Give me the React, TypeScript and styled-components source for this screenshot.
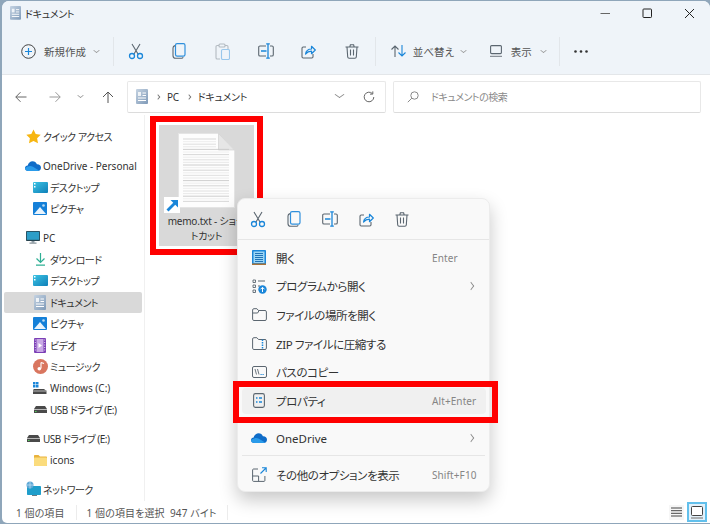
import React from 'react'
import styled, { createGlobalStyle } from 'styled-components'

const GlobalStyle = createGlobalStyle`
  html, body {
    margin: 0;
    padding: 0;
    width: 710px;
    height: 524px;
    overflow: hidden;
    background: #8fa6ba;
    font-family: "Noto Sans", "Noto Sans CJK JP", sans-serif;
    font-feature-settings: "palt";
    color: #2b2b2b;
  }
  * { box-sizing: border-box; }
  svg { display: block; flex: none; }
`

const Window = styled.div`
  position: relative;
  width: 708px;
  height: 522px;
  margin: 1px 0 0 2px;
  background: #fff;
  border-radius: 7px 7px 0 5px;
  overflow: hidden;
  display: flex;
  flex-direction: column;
`

const TitleBar = styled.div`
  height: 24px;
  background: #eff4f9;
  display: flex;
  align-items: center;
  padding-left: 8px;
  font-size: 10px;
  letter-spacing: -0.3px;
`

const TitleText = styled.span`
  flex: 1;
  color: #333;
  margin-left: 4px;
`

const WindowButton = styled.div`
  width: 42px;
  display: flex;
  justify-content: center;
`

const Toolbar = styled.div`
  height: 50px;
  background: #eff4f9;
  border-bottom: 1px solid #e3e6e9;
  display: flex;
  align-items: center;
  padding: 3px 0 0 19px;
  font-size: 10.5px;
  color: #555;
`

const LabelButton = styled.div<{ $width: number; $gap: number }>`
  width: ${p => p.$width}px;
  display: flex;
  align-items: center;
  gap: ${p => p.$gap}px;
`

const IconButton = styled.div<{ $disabled?: boolean }>`
  width: 43.3px;
  display: flex;
  justify-content: center;
  opacity: ${p => (p.$disabled ? 0.4 : 1)};
`

const ToolbarSep = styled.div<{ $left: number; $right: number }>`
  width: 1px;
  height: 29px;
  background: #e2e6ea;
  margin: 0 ${p => p.$right}px 0 ${p => p.$left}px;
`

const Chevron = styled.span`
  width: 5px;
  height: 5px;
  border-right: 1px solid #9a9a9a;
  border-bottom: 1px solid #9a9a9a;
  transform: scale(0.9, 0.7) rotate(45deg);
  margin-top: -2px;
`

const AddressRow = styled.div`
  height: 40px;
  display: flex;
  align-items: center;
  padding: 3px 7px 0 0;
  font-size: 10px;
  letter-spacing: -0.3px;
`

const NavGroup = styled.div`
  width: 125px;
  display: flex;
  align-items: center;
  padding-left: 12px;
`

const NavButton = styled.div<{ $left: number }>`
  width: 14px;
  margin-left: ${p => p.$left}px;
  display: flex;
  justify-content: center;
`

const Field = styled.div`
  height: 32px;
  border: 1px solid #e8e8e8;
  border-bottom-color: #dcdcdc;
  border-radius: 2px;
  display: flex;
  align-items: center;
  background: #fff;
`

const AddressBox = styled(Field)`
  width: 259px;
  padding-left: 8px;
  color: #333;
`

const Crumb = styled.span`
  margin-left: 7px;
  white-space: nowrap;
`

const CrumbSep = styled.span`
  margin-left: 8px;
  width: 4px;
  height: 4px;
  border-top: 1px solid #777;
  border-right: 1px solid #777;
  transform: scaleX(0.8) rotate(45deg);
`

const AddressTail = styled.div`
  margin-left: auto;
  display: flex;
  align-items: center;
  padding-right: 10px;
  gap: 20px;
`

const DropChevron = styled.span`
  width: 7px;
  height: 7px;
  border-right: 1px solid #888;
  border-bottom: 1px solid #888;
  transform: scaleY(0.7) rotate(45deg);
  margin-top: -4px;
`

const SearchBox = styled(Field)`
  width: 308px;
  margin-left: 7px;
  padding-left: 13px;
  gap: 12px;
  color: #8a8a8a;
  font-size: 10px;
  letter-spacing: -0.5px;
`

const Body = styled.div`
  flex: 1;
  display: flex;
  min-height: 0;
`

const Sidebar = styled.div`
  width: 143px;
  border-right: 1px solid #f0f0f0;
  padding: 11px 2px 0 2px;
  font-size: 10px;
`

const NavSection = styled.div`
  margin-bottom: 7.5px;
`

const NavRow = styled.div<{ $level?: number; $active?: boolean }>`
  height: 21.5px;
  display: flex;
  align-items: center;
  gap: 2px;
  padding-left: ${p => (p.$level ? 28 : 21)}px;
  white-space: nowrap;
  border-radius: 2px;
  color: #333;
  background: ${p => (p.$active ? '#d9d9d9' : 'transparent')};
`

const NavLabel = styled.span<{ $latin?: boolean }>`
  letter-spacing: ${p => (p.$latin ? 0 : -0.5)}px;
`

const NavIcon = styled.span`
  width: 16px;
  height: 16px;
  display: flex;
  align-items: center;
  justify-content: center;
`

const Content = styled.div`
  flex: 1;
  padding: 1px 0 0 5px;
`

const FileFrame = styled.div`
  width: 113px;
  height: 139px;
  border: 6px solid #ff0000;
  padding: 3px;
  background: #fff;
`

const FileTile = styled.div`
  position: relative;
  width: 95px;
  height: 121px;
  background: #d9d9d9;
  display: flex;
  flex-direction: column;
  align-items: center;
  padding-top: 8px;
`

const ShortcutBadge = styled.span`
  position: absolute;
  left: 5px;
  top: 72px;
  width: 16px;
  height: 16px;
  background: #fff;
  display: flex;
  align-items: center;
  justify-content: center;
`

const FileName = styled.div`
  margin-top: 6px;
  width: 95px;
  text-align: center;
  font-size: 10px;
  line-height: 15px;
  letter-spacing: -0.2px;
  color: #333;
  white-space: nowrap;
`

const StatusBar = styled.div`
  height: 22px;
  display: flex;
  align-items: center;
  padding-left: 14px;
  font-size: 10px;
  color: #555;
  letter-spacing: 0.1px;
`

const StatusSep = styled.span`
  width: 1px;
  height: 15px;
  background: #ececec;
  margin: 0 10px 0 11px;
`

const ViewToggles = styled.div`
  margin-left: auto;
  display: flex;
  align-items: center;
  gap: 3px;
  padding-right: 3px;
`

const ViewToggle = styled.span<{ $active?: boolean }>`
  width: ${p => (p.$active ? 20 : 15)}px;
  height: ${p => (p.$active ? 20 : 15)}px;
  display: flex;
  align-items: center;
  justify-content: center;
  background: ${p => (p.$active ? '#e2f1fb' : '#f6f6f6')};
  border: ${p => (p.$active ? '2px solid #62c0ec' : 'none')};
`

const Menu = styled.div`
  position: absolute;
  left: 235px;
  top: 197px;
  width: 253px;
  height: 294px;
  background: #f9f9f9;
  border-radius: 8px;
  border: 1px solid #ececec;
  box-shadow: 0 8px 18px rgba(0, 0, 0, 0.22);
  display: flex;
  flex-direction: column;
  font-size: 11.5px;
  color: #333;
`

const MenuIconBar = styled.div`
  height: 41px;
  flex: none;
  border-bottom: 1px solid #e6e6e6;
  display: flex;
  align-items: center;
  padding: 0 0 0 2px;
  margin-bottom: 3.5px;
`

const MenuIconButton = styled.div`
  width: 36px;
  display: flex;
  justify-content: center;
`

const MenuItem = styled.div<{ $hover?: boolean }>`
  height: ${p => (p.$hover ? 26 : 28.6)}px;
  margin: ${p => (p.$hover ? '1.3px 3px 10px 4px' : '0 3px 0 4px')};
  display: flex;
  align-items: center;
  padding: 0 10px 0 9px;
  border-radius: 4px;
  background: ${p => (p.$hover ? '#f0f0f0' : 'transparent')};
`

const MenuIcon = styled.span`
  width: 16px;
  height: 16px;
  margin-right: 9px;
  display: flex;
  align-items: center;
  justify-content: center;
`

const MenuLabel = styled.span<{ $latin?: boolean }>`
  flex: 1;
  white-space: nowrap;
  letter-spacing: ${p => (p.$latin ? 0 : -0.4)}px;
`

const Shortcut = styled.span`
  width: 44px;
  color: #858585;
  font-size: 10px;
  letter-spacing: 0.1px;
  white-space: nowrap;
`

const MenuArrow = styled.span`
  width: 6px;
  height: 6px;
  border-top: 1px solid #8a8a8a;
  border-right: 1px solid #8a8a8a;
  transform: scaleX(0.75) rotate(45deg);
  margin-right: 2px;
`

const MenuDivider = styled.div`
  height: 1px;
  background: #e6e6e6;
  margin: 3px 4px 4px;
`

const RedBox = styled.div`
  position: absolute;
  left: 231px;
  top: 380px;
  width: 265px;
  height: 42px;
  border: 6px solid #ff0000;
  pointer-events: none;
`

const B = '#1a86d9'
const G = '#5b6670'

const CutIcon = () => (
  <svg width="16" height="17" viewBox="0 0 16 17" fill="none">
    <path d="M4 1l6 10M12 1L6 11" stroke={G} strokeWidth="1.1" />
    <circle cx="4" cy="13" r="2.5" stroke={B} strokeWidth="1.3" />
    <circle cx="12" cy="13" r="2.5" stroke={B} strokeWidth="1.3" />
  </svg>
)

const CopyIcon = () => (
  <svg width="14" height="16" viewBox="0 0 14 16" fill="none">
    <rect x="3.5" y="0.7" width="9.5" height="12.5" rx="1.6" stroke="#2f8fdc" strokeWidth="1.2" />
    <path d="M3 2.6C1.6 3 1 3.6 1 5v7.5C1 14.2 2 15.3 3.6 15.3h6c.8 0 1.3-.4 1.6-1" stroke={G} strokeWidth="1.1" />
  </svg>
)

const PasteIcon = () => (
  <svg width="15" height="17" viewBox="0 0 15 17" fill="none">
    <path d="M4 2.5H2.2C1.5 2.5 1 3 1 3.7v11C1 15.5 1.5 16 2.2 16H5M10 2.5h1.8c.7 0 1.2.5 1.2 1.2V6" stroke={G} strokeWidth="1.1" />
    <rect x="4" y="1" width="6" height="3" rx="1" stroke={G} strokeWidth="1.1" />
    <rect x="6.5" y="6.5" width="8" height="10" rx="1.3" stroke={B} strokeWidth="1.1" />
  </svg>
)

const RenameIcon = () => (
  <svg width="16" height="16" viewBox="0 0 16 16" fill="none">
    <path d="M8 3H2C1.2 3 .7 3.5 .7 4.3v7.4c0 .8.5 1.3 1.3 1.3h6M12 3h2c.8 0 1.3.5 1.3 1.3v7.4c0 .8-.5 1.3-1.3 1.3h-2" stroke={G} strokeWidth="1.1" />
    <path d="M3 8h5.5M10 .8v14.4M8.2.8h3.6M8.2 15.2h3.6" stroke={B} strokeWidth="1.3" />
  </svg>
)

const ShareIcon = () => (
  <svg width="15" height="15" viewBox="0 0 15 15" fill="none">
    <path d="M5 3H2.2C1.4 3 1 3.5 1 4.2v8.6c0 .8.5 1.2 1.2 1.2h8.6c.7 0 1.2-.4 1.2-1.2V10" stroke={G} strokeWidth="1.1" />
    <path d="M4.5 10c.5-3 2.5-5 6-5V2.3L14.3 6l-3.8 3.7V7.2c-2.5 0-4.5 1-6 2.8z" stroke={B} strokeWidth="1.2" strokeLinejoin="round" />
  </svg>
)

const TrashIcon = () => (
  <svg width="14" height="15" viewBox="0 0 14 15" fill="none" stroke={G} strokeWidth="1.1">
    <path d="M.5 3h13M4.8 3l.6-2.2h3.2L9.2 3M2 3l.7 10c.1.8.6 1.3 1.4 1.3h5.8c.8 0 1.3-.5 1.4-1.3L12 3M5.5 5.500v6M8.500 5.500v6" />
  </svg>
)

const DocIcon = ({ size = 12 }: { size?: number }) => (
  <svg width={size} height={size * 1.25} viewBox="0 0 12 15">
    <defs>
      <linearGradient id="docfill" x1="0" y1="0" x2="1" y2="1">
        <stop offset="0" stopColor="#c5d3e2" />
        <stop offset="1" stopColor="#7f9ab8" />
      </linearGradient>
    </defs>
    <rect width="12" height="15" rx="1" fill="url(#docfill)" />
    <path d="M6.500 4h3.500M6.500 6.500h3.500M2 9h8M2 11.500h8" stroke="#fff" strokeWidth="1" />
    <rect x="2" y="3" width="3" height="4" fill="#fff" opacity="0.8" />
  </svg>
)

const StarIcon = () => (
  <svg width="15" height="15" viewBox="0 0 15 15">
    <path d="M7.500.5l2.200 4.600 5 .7-3.600 3.500.9 5-4.500-2.400L3 14.300l.9-5L.3 5.800l5-.7z" fill="#f7b611" />
  </svg>
)

const CloudIcon = ({ width = 16 }: { width?: number }) => (
  <svg width={width} height={width * 0.625} viewBox="0 0 16 10">
    <path d="M3.400 10C1.400 10 0 8.800 0 7.200 0 5.600 1.200 4.600 2.700 4.500 3.300 2 5.200.3 7.600.3c2 0 3.600 1.200 4.300 3 2.300-.2 4.100 1.400 4.100 3.400S14.500 10 12.700 10z" fill="#0f6cc8" />
    <path d="M3.400 10C1.400 10 0 8.800 0 7.200c2.500-2 5-3 8-1.500l6 3.800c-.4.300-.8.500-1.300.5z" fill="#2a9bea" />
  </svg>
)

const DesktopIcon = () => (
  <svg width="15" height="11" viewBox="0 0 15 11">
    <defs>
      <linearGradient id="deskfill" x1="0" y1="0" x2="1" y2="1">
        <stop offset="0" stopColor="#3cc4e4" />
        <stop offset="1" stopColor="#0f7fb8" />
      </linearGradient>
    </defs>
    <rect width="15" height="11" rx="1" fill="url(#deskfill)" />
    <rect x="1" y="1" width="1.500" height="1.500" fill="#fff" />
    <rect x="1" y="4" width="1.500" height="1.500" fill="#fff" />
  </svg>
)

const PictureIcon = () => (
  <svg width="14" height="13" viewBox="0 0 14 13">
    <rect width="14" height="13" rx="1" fill="#1580d8" />
    <path d="M1 12l6-7 6 7z" fill="#eaf4fc" />
    <circle cx="10.500" cy="3.500" r="1.300" fill="#bcdcf4" />
  </svg>
)

const MonitorIcon = () => (
  <svg width="14" height="13" viewBox="0 0 14 13">
    <rect width="14" height="10" rx="0.800" fill="#27434f" />
    <rect x="0.800" y="0.800" width="12.400" height="8" fill="#2d9ec8" />
    <rect x="5.500" y="10" width="3" height="1.600" fill="#8b9aa3" />
    <rect x="3.500" y="11.600" width="7" height="1" fill="#6c7b84" />
  </svg>
)

const DownloadIcon = () => (
  <svg width="11" height="13" viewBox="0 0 11 13" fill="none" stroke="#2eaf94" strokeWidth="1.200">
    <path d="M5.500 0v9M1.500 5.500l4 4 4-4M1 12.200h9" />
  </svg>
)

const VideoIcon = () => (
  <svg width="12" height="15" viewBox="0 0 12 15">
    <rect width="12" height="15" rx="1" fill="#7b3fb6" />
    <rect x="2.500" y="1" width="7" height="13" fill="#c9a9e6" />
    <path d="M4.500 5l3.500 2.500L4.500 10z" fill="#fff" />
    <path d="M.8 2h1M.8 4.500h1M.8 7h1M.8 9.500h1M.8 12h1M10.200 2h1M10.200 4.500h1M10.200 7h1M10.200 9.500h1M10.200 12h1" stroke="#fff" strokeWidth="0.800" />
  </svg>
)

const MusicIcon = () => (
  <svg width="15" height="15" viewBox="0 0 15 15">
    <circle cx="7.500" cy="7.500" r="7.500" fill="#d9765f" />
    <path d="M8 3.500v6M8 3.500l3 1" stroke="#fff" strokeWidth="1.100" fill="none" />
    <circle cx="6.300" cy="9.800" r="1.800" fill="#fff" />
  </svg>
)

const DriveIcon = () => (
  <svg width="13" height="7" viewBox="0 0 13 7">
    <path d="M2 0h9l2 3v4H0V3z" fill="#4a4a4a" />
    <rect y="3" width="13" height="1" fill="#b8b8b8" />
    <rect x="1" y="5" width="1.500" height="1" fill="#52d45a" />
  </svg>
)

const WindowsDriveIcon = () => (
  <svg width="14" height="12" viewBox="0 0 14 12">
    <path d="M0 0h2.500v2.500H0zM3 0h2.500v2.500H3zM0 3h2.500v2.500H0zM3 3h2.500v2.500H3z" fill="#1a86d9" />
    <path d="M1 7h10l2.500 2v3H0V8z" fill="#4a4a4a" />
    <rect y="8.500" width="14" height="1" fill="#b8b8b8" />
  </svg>
)

const FolderIcon = () => (
  <svg width="13" height="11" viewBox="0 0 13 11">
    <path d="M0 1c0-.6.4-1 1-1h3.500l1.500 1.500h6c.6 0 1 .4 1 1V10c0 .6-.4 1-1 1H1c-.6 0-1-.4-1-1z" fill="#e9b23c" />
    <rect y="2.500" width="13" height="8.500" rx="0.800" fill="#fbdc7d" />
  </svg>
)

const NetworkIcon = () => (
  <svg width="15" height="16" viewBox="0 0 15 16">
    <rect x="1" y="5" width="14" height="9" rx="0.800" fill="#1f9ecb" />
    <rect x="6" y="14" width="5" height="1" fill="#6c7b84" />
    <circle cx="4" cy="4" r="3.500" fill="#5fa8d6" />
    <path d="M1 4h6M4 .6v7" stroke="#d8ecf8" strokeWidth="0.600" />
  </svg>
)

const NotepadIcon = () => (
  <svg width="14" height="15" viewBox="0 0 14 15">
    <rect width="14" height="15" rx="0.800" fill="#1a86d9" />
    <rect x="1.500" y="1.500" width="11" height="11.500" fill="#9dd6f5" />
    <path d="M3 3.500h8M3 5.500h8M3 7.500h8M3 9.500h8M3 11.500h8" stroke="#1268b0" strokeWidth="0.900" />
    <rect y="13.500" width="14" height="1.500" fill="#a9743a" />
  </svg>
)

const OpenWithIcon = () => (
  <svg width="15" height="15" viewBox="0 0 15 15" fill="none">
    <path d="M1 1h2.500v2.500H1zM1 6h2.500v2.500H1zM1 11h2.500v2.500H1z" stroke={G} strokeWidth="0.900" />
    <path d="M6 2h7M6 7h2" stroke={G} strokeWidth="1" />
    <circle cx="10.500" cy="10.500" r="4.200" fill={B} />
    <path d="M10.500 13v-4.500M8.500 10.300l2-2 2 2" stroke="#fff" strokeWidth="1" />
  </svg>
)

const MenuFolderIcon = ({ zip }: { zip?: boolean }) => (
  <svg width="15" height="13" viewBox="0 0 15 13" fill="none">
    <path d="M.6 2C.6 1.200 1.100.700 1.900.700h3l1.600 1.800h6.500c.9 0 1.400.5 1.400 1.300v7.400c0 .8-.5 1.300-1.400 1.300H1.900c-.8 0-1.300-.5-1.300-1.300z" stroke={G} strokeWidth="1" />
    {zip ? <path d="M10.500 2.500v9.500" stroke={B} strokeWidth="1.500" strokeDasharray="1.500 1" /> : <path d="M.6 5h5l1.500-2.500" stroke={G} strokeWidth="1" />}
  </svg>
)

const PathIcon = () => (
  <svg width="15" height="12" viewBox="0 0 15 12" fill="none">
    <rect x="0.500" y="0.500" width="14" height="11" rx="1.500" stroke={G} strokeWidth="1" />
    <path d="M3 3l1.500 5.500M5.500 3L7 8.500" stroke={G} strokeWidth="0.900" />
    <path d="M8.500 8.500h1.200M10.500 8.500h1.200" stroke={B} strokeWidth="1.100" />
  </svg>
)

const PropertiesIcon = () => (
  <svg width="12" height="15" viewBox="0 0 12 15" fill="none">
    <rect x="0.600" y="0.600" width="10.800" height="13.800" rx="1.800" stroke={G} strokeWidth="1.100" />
    <path d="M3 5h1.500M6 5h3M3 9h1.500M6 9h3" stroke={B} strokeWidth="1.400" />
  </svg>
)

const MoreOptionsIcon = () => (
  <svg width="15" height="15" viewBox="0 0 15 15" fill="none">
    <path d="M6 2H1.500C1 2 .6 2.400.6 3v10.500c0 .5.400.9.900.9H12c.5 0 .9-.4.900-.9V9M.6 9h6v5.400" stroke={G} strokeWidth="1" />
    <path d="M8.500 6.500L14 1M10 .8h4.200V5" stroke={B} strokeWidth="1.100" />
  </svg>
)

const PlusIcon = () => (
  <svg width="15" height="15" viewBox="0 0 15 15" fill="none">
    <circle cx="7.500" cy="7.500" r="6.800" stroke="#444" strokeWidth="1" />
    <path d="M7.500 4v7M4 7.500h7" stroke={B} strokeWidth="1.200" />
  </svg>
)

const SortIcon = () => (
  <svg width="15" height="12" viewBox="0 0 15 12" fill="none" strokeWidth="1.100">
    <path d="M4 12V1M.5 4.500L4 1l3.500 3.500" stroke={G} />
    <path d="M11 0v11M7.500 7.500L11 11l3.500-3.500" stroke={B} />
  </svg>
)

const ViewIcon = () => (
  <svg width="12" height="12" viewBox="0 0 12 12" fill="none">
    <rect x="0.600" y="0.600" width="10.800" height="8" rx="1" stroke={G} strokeWidth="1.100" />
    <path d="M0 11.300h12" stroke="#8a9199" strokeWidth="1.300" />
  </svg>
)

const DotsIcon = () => (
  <svg width="14" height="3" viewBox="0 0 14 3" fill="#333">
    <circle cx="1.500" cy="1.500" r="1.300" />
    <circle cx="7" cy="1.500" r="1.300" />
    <circle cx="12.500" cy="1.500" r="1.300" />
  </svg>
)

const ArrowIcon = ({ dir, color }: { dir: 'left' | 'right' | 'up'; color: string }) => {
  const d = {
    left: 'M11.500 6H.8M5.500 1.200L.8 6l4.700 4.800',
    right: 'M.5 6h10.700M6.500 1.200L11.200 6l-4.700 4.800',
    up: 'M6 12V1M1 6l5-5 5 5',
  }[dir]
  return (
    <svg width="12" height="12" viewBox="0 0 12 12" fill="none" stroke={color} strokeWidth="1">
      <path d={d} />
    </svg>
  )
}

const ReloadIcon = () => (
  <svg width="12" height="12" viewBox="0 0 12 12" fill="none" stroke="#666" strokeWidth="1">
    <path d="M10.800 6A4.800 4.800 0 1 1 9.300 2.500M9.800.4v2.700H7" />
  </svg>
)

const SearchIcon = () => (
  <svg width="12" height="12" viewBox="0 0 12 12" fill="none" stroke="#8a8a8a" strokeWidth="1">
    <circle cx="7.500" cy="4.500" r="3.700" />
    <path d="M4.800 7.200L.8 11.200" />
  </svg>
)

const WindowGlyph = ({ kind }: { kind: 'min' | 'max' | 'close' }) => (
  <svg width="11" height="11" viewBox="0 0 11 11" fill="none" stroke="#222" strokeWidth="1">
    {kind === 'min' && <path d="M.500 5.500h9.500" stroke="#666" />}
    {kind === 'max' && <rect x="1" y="1" width="8.500" height="8.500" rx="0.800" />}
    {kind === 'close' && <path d="M1 1l9 9M10 1l-9 9" />}
  </svg>
)

const ListViewIcon = () => (
  <svg width="11" height="10" viewBox="0 0 11 10" stroke="#444" strokeWidth="1">
    <path d="M0 1h11M0 3.700h11M0 6.300h11M0 9h11" />
  </svg>
)

const TileViewIcon = () => (
  <svg width="12" height="13" viewBox="0 0 12 13" fill="none">
    <rect x="0.500" y="0.500" width="11" height="9" rx="1" stroke="#444" fill="#fff" />
    <path d="M0 12h12" stroke="#999" strokeWidth="1.500" />
  </svg>
)

const LINE_SHADES = ['#d2d2d2', '#ececec', '#dcdcdc', '#e6e6e6', '#c8c8c8', '#eeeeee']

const TextFileIcon = () => (
  <svg width="57" height="75" viewBox="0 0 57 75">
    <path d="M.5.5h40L56.500 17v57.500H.5z" fill="#fdfdfd" stroke="#e4e4e4" />
    <path d="M40.500.5V17h16z" fill="#e6e6e6" stroke="#d0d0d0" strokeWidth="0.700" />
    {Array.from({ length: 25 }, (_, i) => (
      <line
        key={i}
        x1="5"
        x2={i < 4 ? 38 : 51}
        y1={6 + i * 2.600}
        y2={6 + i * 2.600}
        stroke={LINE_SHADES[i % 6]}
        strokeWidth="0.900"
      />
    ))}
  </svg>
)

const ShortcutArrow = () => (
  <svg width="13" height="13" viewBox="0 0 13 13" fill="none">
    <path d="M1.500 11.500L9 4" stroke="#1a86d9" strokeWidth="2.800" />
    <path d="M4.500 1h7.500v7.500z" fill="#1a86d9" />
  </svg>
)

const navSections: { label: string; icon: React.ReactNode; level?: number; active?: boolean; latin?: boolean }[][] = [
  [{ label: 'クイック アクセス', icon: <StarIcon /> }],
  [
    { label: 'OneDrive - Personal', icon: <CloudIcon />, latin: true },
    { label: 'デスクトップ', icon: <DesktopIcon />, level: 1 },
    { label: 'ピクチャ', icon: <PictureIcon />, level: 1 },
  ],
  [
    { label: 'PC', icon: <MonitorIcon />, latin: true },
    { label: 'ダウンロード', icon: <DownloadIcon />, level: 1 },
    { label: 'デスクトップ', icon: <DesktopIcon />, level: 1 },
    { label: 'ドキュメント', icon: <DocIcon />, level: 1, active: true },
    { label: 'ピクチャ', icon: <PictureIcon />, level: 1 },
    { label: 'ビデオ', icon: <VideoIcon />, level: 1 },
    { label: 'ミュージック', icon: <MusicIcon />, level: 1 },
    { label: 'Windows (C:)', icon: <WindowsDriveIcon />, level: 1, latin: true },
    { label: 'USB ドライブ (E:)', icon: <DriveIcon />, level: 1 },
  ],
  [
    { label: 'USB ドライブ (E:)', icon: <DriveIcon /> },
    { label: 'icons', icon: <FolderIcon />, level: 1, latin: true },
  ],
  [{ label: 'ネットワーク', icon: <NetworkIcon /> }],
]

const App: React.FC = () => {
  return (
    <>
      <GlobalStyle />
      <Window>
        <TitleBar>
          <DocIcon size={11} />
          <TitleText>ドキュメント</TitleText>
          <WindowButton><WindowGlyph kind="min" /></WindowButton>
          <WindowButton><WindowGlyph kind="max" /></WindowButton>
          <WindowButton><WindowGlyph kind="close" /></WindowButton>
        </TitleBar>

        <Toolbar>
          <LabelButton $width={80} $gap={8}>
            <PlusIcon />
            <span>新規作成</span>
            <Chevron />
          </LabelButton>
          <ToolbarSep $left={12} $right={0} />
          <IconButton><CutIcon /></IconButton>
          <IconButton><CopyIcon /></IconButton>
          <IconButton $disabled><PasteIcon /></IconButton>
          <IconButton><RenameIcon /></IconButton>
          <IconButton><ShareIcon /></IconButton>
          <IconButton><TrashIcon /></IconButton>
          <ToolbarSep $left={1} $right={15} />
          <LabelButton $width={99} $gap={7}>
            <SortIcon />
            <span>並べ替え</span>
            <Chevron />
          </LabelButton>
          <LabelButton $width={69} $gap={9}>
            <ViewIcon />
            <span>表示</span>
            <Chevron />
          </LabelButton>
          <ToolbarSep $left={0} $right={14} />
          <DotsIcon />
        </Toolbar>

        <AddressRow>
          <NavGroup>
            <NavButton $left={0}><ArrowIcon dir="left" color="#666" /></NavButton>
            <NavButton $left={20}><ArrowIcon dir="right" color="#999" /></NavButton>
            <NavButton $left={11}><Chevron /></NavButton>
            <NavButton $left={14}><ArrowIcon dir="up" color="#555" /></NavButton>
          </NavGroup>
          <AddressBox>
            <DocIcon />
            <CrumbSep />
            <Crumb>PC</Crumb>
            <CrumbSep />
            <Crumb>ドキュメント</Crumb>
            <AddressTail>
              <DropChevron />
              <ReloadIcon />
            </AddressTail>
          </AddressBox>
          <SearchBox>
            <SearchIcon />
            <span>ドキュメントの検索</span>
          </SearchBox>
        </AddressRow>

        <Body>
          <Sidebar>
            {navSections.map((section, i) => (
              <NavSection key={i}>
                {section.map((row, j) => (
                  <NavRow key={j} $level={row.level} $active={row.active}>
                    <NavIcon>{row.icon}</NavIcon>
                    <NavLabel $latin={row.latin}>{row.label}</NavLabel>
                  </NavRow>
                ))}
              </NavSection>
            ))}
          </Sidebar>
          <Content>
            <FileFrame>
              <FileTile>
                <TextFileIcon />
                <ShortcutBadge><ShortcutArrow /></ShortcutBadge>
                <FileName>
                  memo.txt - ショー
                  <br />
                  トカット
                </FileName>
              </FileTile>
            </FileFrame>
          </Content>
        </Body>

        <StatusBar>
          <span>1 個の項目</span>
          <StatusSep />
          <span>1 個の項目を選択&nbsp;&nbsp;947 バイト</span>
          <StatusSep />
          <ViewToggles>
            <ViewToggle><ListViewIcon /></ViewToggle>
            <ViewToggle $active><TileViewIcon /></ViewToggle>
          </ViewToggles>
        </StatusBar>

        <Menu>
          <MenuIconBar>
            <MenuIconButton><CutIcon /></MenuIconButton>
            <MenuIconButton><CopyIcon /></MenuIconButton>
            <MenuIconButton><RenameIcon /></MenuIconButton>
            <MenuIconButton><ShareIcon /></MenuIconButton>
            <MenuIconButton><TrashIcon /></MenuIconButton>
          </MenuIconBar>
          <MenuItem>
            <MenuIcon><NotepadIcon /></MenuIcon>
            <MenuLabel>開く</MenuLabel>
            <Shortcut>Enter</Shortcut>
          </MenuItem>
          <MenuItem>
            <MenuIcon><OpenWithIcon /></MenuIcon>
            <MenuLabel>プログラムから開く</MenuLabel>
            <MenuArrow />
          </MenuItem>
          <MenuItem>
            <MenuIcon><MenuFolderIcon /></MenuIcon>
            <MenuLabel>ファイルの場所を開く</MenuLabel>
          </MenuItem>
          <MenuItem>
            <MenuIcon><MenuFolderIcon zip /></MenuIcon>
            <MenuLabel>ZIP ファイルに圧縮する</MenuLabel>
          </MenuItem>
          <MenuItem>
            <MenuIcon><PathIcon /></MenuIcon>
            <MenuLabel>パスのコピー</MenuLabel>
          </MenuItem>
          <MenuItem $hover>
            <MenuIcon><PropertiesIcon /></MenuIcon>
            <MenuLabel>プロパティ</MenuLabel>
            <Shortcut>Alt+Enter</Shortcut>
          </MenuItem>
          <MenuItem>
            <MenuIcon><CloudIcon /></MenuIcon>
            <MenuLabel $latin>OneDrive</MenuLabel>
            <MenuArrow />
          </MenuItem>
          <MenuDivider />
          <MenuItem>
            <MenuIcon><MoreOptionsIcon /></MenuIcon>
            <MenuLabel>その他のオプションを表示</MenuLabel>
            <Shortcut>Shift+F10</Shortcut>
          </MenuItem>
        </Menu>
        <RedBox />
      </Window>
    </>
  )
}

export default App
